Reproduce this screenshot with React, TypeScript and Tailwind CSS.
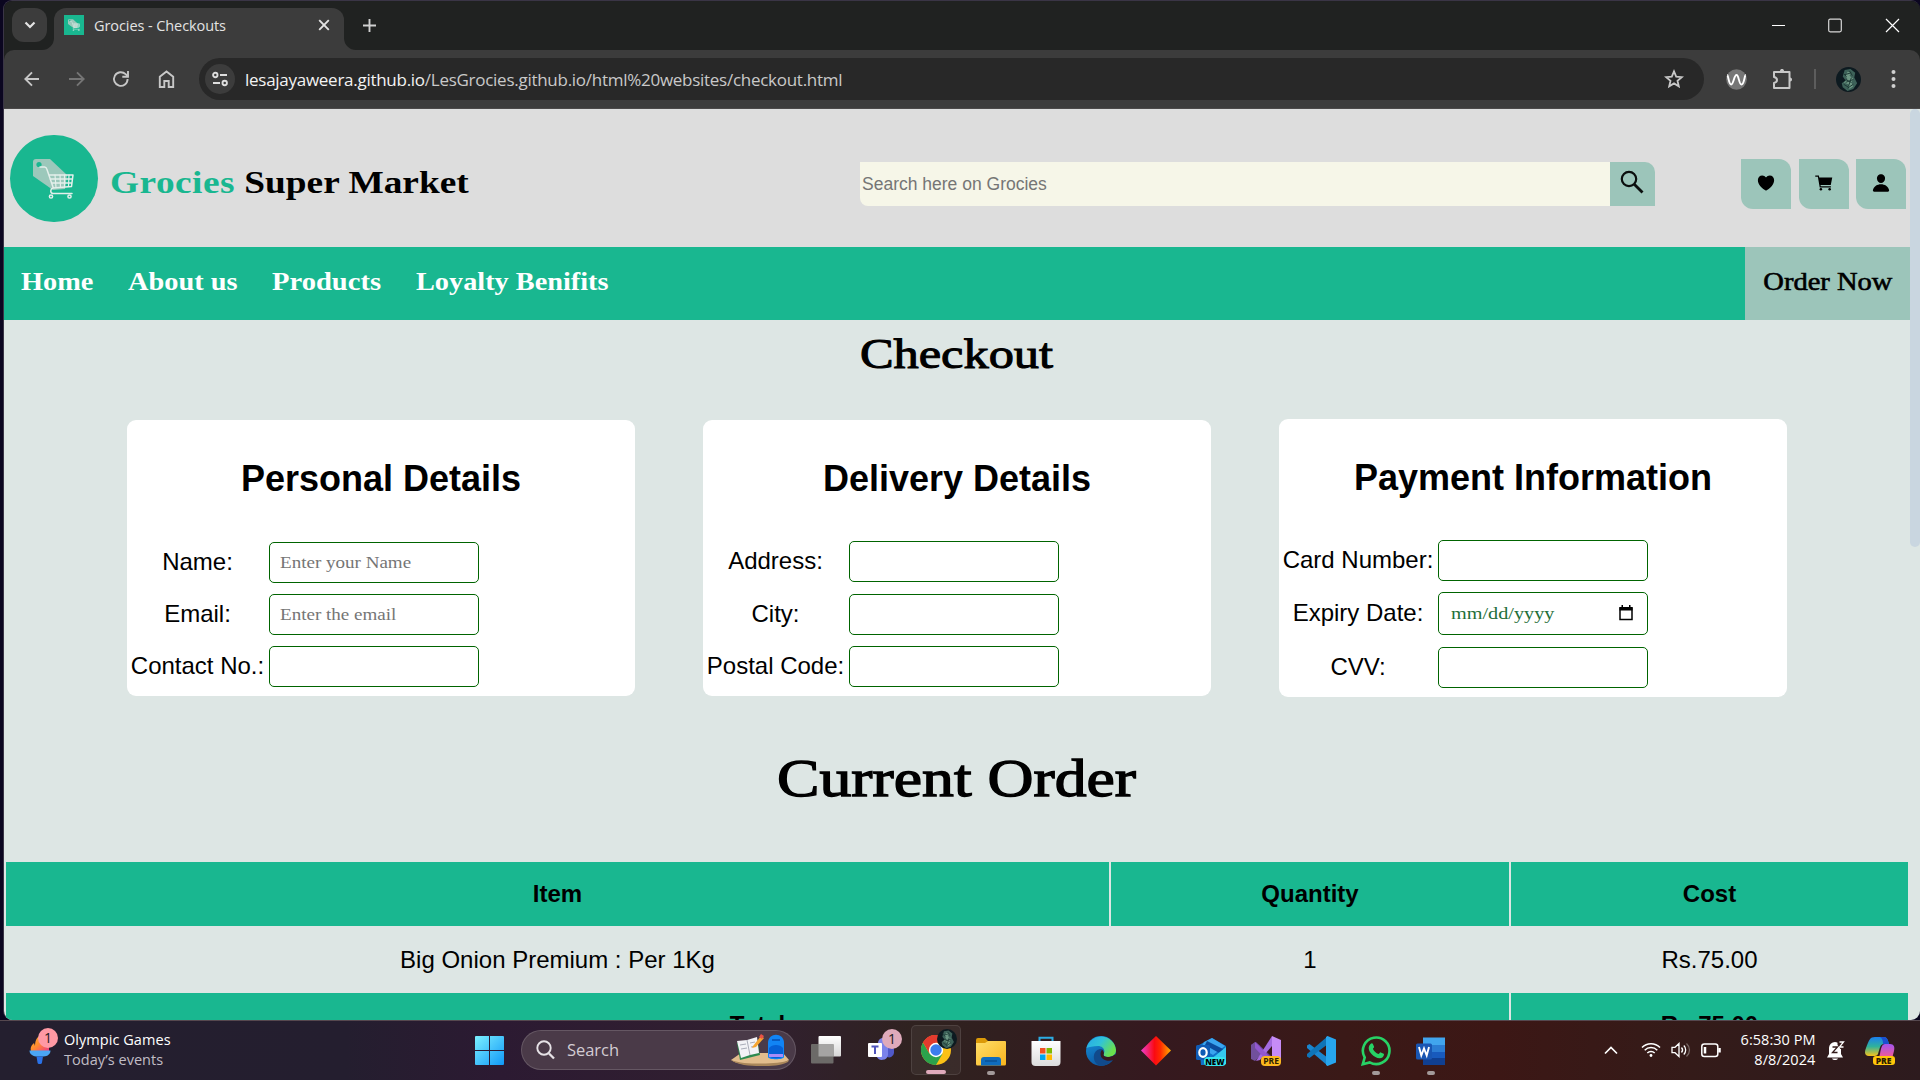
import React from 'react';
import { IoHeart, IoCartSharp, IoPerson } from 'react-icons/io5';

const serif = "font-['Liberation_Serif',serif]";
const sans = "font-['Liberation_Sans',sans-serif]";
const ui = "font-['Open_Sans','Noto_Sans',sans-serif]";

function TabStrip() {
  return (
    <div className="flex h-[49px] shrink-0 items-start bg-[#202221] pl-2 pt-[7px]">
      <div className="flex h-[34px] w-[35px] items-center justify-center rounded-xl bg-[#3c3c3c]">
        <svg width="12" height="8" viewBox="0 0 12 8" fill="none" stroke="#e3e3e3" strokeWidth="2.2">
          <path d="M1.5 1.5 6 6l4.500-4.500" />
        </svg>
      </div>
      <div className="relative ml-[7px] flex h-[42px] w-[290px] items-center rounded-t-xl bg-[#3c3c3c] pb-[8px] pl-[10px]">
        <svg className="absolute -left-3 bottom-0" width="12" height="12" viewBox="0 0 12 12" fill="#3c3c3c">
          <path d="M12 0v12H0A12 12 0 0 0 12 0Z" />
        </svg>
        <svg className="absolute -right-3 bottom-0" width="12" height="12" viewBox="0 0 12 12" fill="#3c3c3c">
          <path d="M0 0v12h12A12 12 0 0 1 0 0Z" />
        </svg>
        <div className="flex size-5 items-center justify-center bg-[#19b790]">
          <svg width="12" height="12" viewBox="0 0 41 40">
            <LogoShape />
          </svg>
        </div>
        <span className="ml-[10px] w-[224px] whitespace-nowrap pt-px text-[14.5px] leading-5 tracking-[-0.08px] text-[#e3e3e3]">Grocies - Checkouts</span>
        <svg width="12" height="12" viewBox="0 0 12 12" stroke="#e3e3e3" strokeWidth="1.900">
          <path d="m1.200 1.200 9.600 9.600M10.800 1.200l-9.600 9.600" />
        </svg>
      </div>
      <svg className="ml-[18px] mt-[10px]" width="15" height="15" viewBox="0 0 15 15" stroke="#d0d0d0" strokeWidth="1.900">
        <path d="M7.500 1v13M1 7.500h13" />
      </svg>
      <div className="ml-auto mr-[20px] mt-[10px] flex items-center">
        <svg width="13" height="15" viewBox="0 0 13 15">
          <path d="M0 7.500h13" stroke="#fff" strokeWidth="1" />
        </svg>
        <svg className="ml-[43px]" width="14" height="15" viewBox="0 0 14 15" fill="none" stroke="#d8d8d8" strokeWidth="1.200">
          <rect x=".7" y="1.200" width="12.600" height="12.600" rx="1.500" />
        </svg>
        <svg className="ml-[43px]" width="15" height="15" viewBox="0 0 15 15" stroke="#fff" strokeWidth="1.200">
          <path d="m1 1 13 13M14 1 1 14" />
        </svg>
      </div>
    </div>
  );
}

function Avatar({ size }: { size: string }) {
  return (
    <svg className={size} viewBox="0 0 26 26">
      <circle cx="13" cy="13" r="13" fill="#0d1a20" />
      <path d="M9 3l6-1 5 4-1 5 3 6-4 6-6 2-5-4-1-4 4-3-3-4z" fill="#3d6259" />
      <path d="M12 5l4 1-2 3 4 3-2 4 2 4-4 3-1-5-5-2 4-3-2-4z" fill="#6d9784" />
      <path d="M7 6l4 4M10 13l6 3M14 4l3 5M8 18l5 3M16 11l-3 9M9 8l7-2M10 16l8-3M12 22l6-4" stroke="#1c3834" strokeWidth="1" />
    </svg>
  );
}

function Toolbar() {
  const line = { fill: 'none', stroke: '#c7c7c7', strokeWidth: 1.9 };
  return (
    <div className="shrink-0 bg-[#202221]">
      <div className="flex h-[59px] items-center rounded-t-[10px] border-b border-[#4b4949] bg-[#3c3c3c] pl-5">
        <svg width="16" height="16" viewBox="0 0 16 16" {...line}>
          <path d="M15 8H2M8 1.300 1.300 8 8 14.700" />
        </svg>
        <svg className="ml-[29px]" width="16" height="16" viewBox="0 0 16 16" {...line} stroke="#757575">
          <path d="M0 8h14M8 1.300 14.700 8 8 14.700" />
        </svg>
        <svg className="ml-[27px]" width="18" height="18" viewBox="0 0 18 18" {...line}>
          <path d="M15.600 9a6.800 6.800 0 1 1-2-4.800L16 6.500" />
          <path d="M16 1v5.700h-5.700" />
        </svg>
        <svg className="ml-7" width="17" height="18" viewBox="0 0 17 18" {...line}>
          <path d="M1.800 17V6.800L8.500 1.500l6.700 5.300V17h-4.500v-6H6.300v6z" />
        </svg>
        <div className="ml-6 flex h-[42px] w-[1505px] items-center rounded-full bg-[#282828] pl-[6px]">
          <div className="flex size-[30px] items-center justify-center rounded-full bg-[#3c3c3c]">
            <svg width="16" height="16" viewBox="0 0 16 16" {...line} stroke="#dedede">
              <circle cx="3.300" cy="4" r="2.200" />
              <path d="M8 4h7M1 12h7" />
              <circle cx="12.700" cy="12" r="2.200" />
            </svg>
          </div>
          <span className="ml-[10px] whitespace-nowrap pt-px text-[17px] tracking-[-0.27px] text-[#c9c9c9]">
            <span className="text-[#f3f3f3]">lesajayaweera.github.io</span>/LesGrocies.github.io/html%20websites/checkout.html
          </span>
          <svg className="ml-auto mr-5" width="20" height="20" viewBox="0 0 20 20" {...line} strokeWidth="1.800">
            <path d="m10 2.400 2.200 5.200 5.600.5-4.300 3.700 1.300 5.500-4.800-2.900-4.800 2.900 1.300-5.500-4.300-3.700 5.600-.5z" />
          </svg>
        </div>
        <svg className="ml-[22px]" width="21" height="21" viewBox="0 0 21 21">
          <circle cx="10.500" cy="10.500" r="10.300" fill="#767676" />
          <path d="M1.200 6c1 0 1.600 9.500 4 9.500S8 6 10.500 6s2.300 9.500 5 9.500S18.500 6 19.800 6" fill="none" stroke="#fff" strokeWidth="1.900" />
        </svg>
        <svg className="ml-6" width="23" height="22" viewBox="0 0 23 22" {...line} strokeWidth="2">
          <path d="M3 4h15.500v16H3v-5c4-1 4-5 0-6z" strokeLinejoin="round" />
          <path d="M9 3c0-2.600 4-2.600 4 0zM19 9.500c2.800 0 2.800 4 0 4z" fill="#c7c7c7" stroke="none" />
        </svg>
        <div className="ml-[20px] h-5 w-[2px] bg-[#5d5d5d]" />
        <div className="ml-5 size-[25px]">
          <Avatar size="size-[25px]" />
        </div>
        <svg className="ml-[30px]" width="5" height="20" viewBox="0 0 5 20" fill="#d0d0d0">
          <circle cx="2.500" cy="3" r="2" />
          <circle cx="2.500" cy="10" r="2" />
          <circle cx="2.500" cy="17" r="2" />
        </svg>
      </div>
    </div>
  );
}

function LogoShape() {
  return (
    <g>
      <path d="M3 0h14l17 16-2 14-12 1L0 17V3a3 3 0 0 1 3-3z" fill="#9cc8bb" />
      <circle cx="6" cy="5.500" r="2.600" fill="#19b790" />
      <g fill="none" stroke="#e4efeb" strokeWidth="1.500" strokeLinejoin="round" strokeLinecap="round">
        <path d="M7 8h4.500c1.500 0 2 1 2.300 2L20 28M16 16h24l-1.500 11.500L20 29c-3 1-3 5 0 5.500h19M17 20h22.500M18.500 24h20.500" />
        <path d="M22 16l1 12.500M27 16l.5 12M31.500 16v12M36 16l-.5 11.500" strokeWidth="1.200" />
        <circle cx="18" cy="37.500" r="1.600" />
        <circle cx="36.500" cy="37.500" r="1.600" />
      </g>
    </g>
  );
}

function SiteHeader() {
  return (
    <header className="flex h-[138px] items-start bg-[#dddddd]">
      <div className="ml-[6px] mt-[26px] flex h-[87px] w-[88px] items-center justify-center rounded-full bg-[#19b790]">
        <svg className="-ml-px" width="41" height="40" viewBox="0 0 41 40">
          <LogoShape />
        </svg>
      </div>
      <div className={`${serif} ml-[12px] mt-[53px] w-[750px]`}>
        <h1 className="w-[310px] origin-left scale-x-[1.167] whitespace-nowrap text-[32px] font-bold leading-10 text-black">
          <span className="tracking-[0.4px] text-[#19b790]">Grocies</span> Super Market
        </h1>
      </div>
      <div className="mt-[53px] flex h-11">
        <div className={`${sans} flex w-[750px] items-center rounded-bl-[8px] bg-[#f6f6e8] pl-[2px] text-[17.500px] text-[#757575]`}>
          <span>Search here on Grocies</span>
        </div>
        <div className="flex w-[45px] justify-center rounded-tr-[10px] bg-[#9cc5ba] pt-2">
          <svg className="-ml-[2px]" width="24" height="24" viewBox="0 0 24 24" fill="none" stroke="#0b0f0e">
            <circle cx="9" cy="9" r="7.200" strokeWidth="2.200" />
            <path d="m14 14 8.500 8.500" strokeWidth="2.900" />
          </svg>
        </div>
      </div>
      <div className="ml-[86px] mt-[50px] flex gap-[7.500px] text-xl text-black">
        {[IoHeart, IoCartSharp, IoPerson].map((Icon, i) => (
          <div key={i} className="flex size-[50px] items-center justify-center rounded-bl-xl rounded-tr-xl bg-[#9cc5ba] pb-[2px]">
            <Icon />
          </div>
        ))}
      </div>
    </header>
  );
}

function SiteNav() {
  return (
    <nav className={`${serif} flex h-[73px] items-center bg-[#19b790] text-[26px] leading-8 text-white`}>
      <div className="flex whitespace-nowrap pb-[3px] font-bold">
        <span className="ml-[17px] w-[107px]"><span className="inline-block origin-left scale-x-[1.09]">Home</span></span>
        <span className="w-[144px]"><span className="inline-block origin-left scale-x-[1.09]">About us</span></span>
        <span className="w-[144px]"><span className="inline-block origin-left scale-x-[1.100]">Products</span></span>
        <span className="inline-block origin-left scale-x-[1.088]">Loyalty Benifits</span>
      </div>
      <div className="ml-auto flex h-full w-[165px] items-center justify-center bg-[#9cc5ba] pb-[3px] text-black">
        <span className="scale-x-[1.097] whitespace-nowrap [-webkit-text-stroke:0.6px_black]">Order Now</span>
      </div>
    </nav>
  );
}

type Field = { label: string; box: string; row?: string; placeholder?: string; date?: boolean };

function Card({ title, frame, head, labelWidth, fields }: { title: string; frame: string; head: string; labelWidth: string; fields: Field[] }) {
  return (
    <section className={`${frame} w-[508px] rounded-[9px] bg-white`}>
      <h2 className={`${head} ${sans} text-center text-[36px] font-bold leading-[117px] text-black`}>{title}</h2>
      {fields.map((f) => (
        <div key={f.label} className={`${f.row ?? ''} flex items-center`}>
          <div className={`${labelWidth} ${sans} pb-[2px] text-center text-[24px] leading-8 text-black`}>{f.label}</div>
          <div className={`${f.box} ml-px flex w-[210px] items-center rounded-[5px] border border-[#006400] pl-[10px] pr-[14px]`}>
            {f.placeholder && (
              <span className={`${serif} origin-left scale-x-[1.12] whitespace-nowrap text-[17px] text-[#757575]`}>{f.placeholder}</span>
            )}
            {f.date && (
              <>
                <span className={`${serif} ml-[2px] origin-left scale-x-[1.190] whitespace-nowrap text-[17px] text-[#1f6f3a]`}>mm/dd/yyyy</span>
                <svg className="mb-[2px] ml-auto" width="14" height="16" viewBox="0 0 14 16">
                  <path d="M1 3h12v11.500H1z" fill="none" stroke="#000" strokeWidth="1.500" />
                  <path d="M.5 2h13v3.500H.5zM2.500 0h1.500v2H2.500zM10 0h1.500v2H10z" />
                </svg>
              </>
            )}
          </div>
        </div>
      ))}
    </section>
  );
}

function OrderTable() {
  return (
    <div className={`${sans} mt-auto grid grid-cols-[1103px_398px_397px] gap-[2px] px-[2px] text-center text-[24px] leading-[63px] text-black`}>
      <div className="h-16 bg-[#19b790] font-bold">Item</div>
      <div className="h-16 bg-[#19b790] font-bold">Quantity</div>
      <div className="h-16 bg-[#19b790] font-bold">Cost</div>
      <div className="h-[63px]">Big Onion Premium : Per 1Kg</div>
      <div>1</div>
      <div>Rs.75.00</div>
      <div className="col-span-2 h-[27px] overflow-hidden bg-[#19b790] font-bold">Total</div>
      <div className="h-[27px] overflow-hidden bg-[#19b790] font-bold">Rs.75.00</div>
    </div>
  );
}

function Page() {
  return (
    <div className="flex min-h-0 flex-1 bg-[#dde6e4]">
      <div className="flex w-[1906px] flex-col">
        <SiteHeader />
        <SiteNav />
        <h1 className={`${serif} mt-[9px] pr-[2px] text-center text-[42px] leading-[50px] text-black [-webkit-text-stroke:1px_black]`}>
          <span className="inline-block scale-x-[1.2]">Checkout</span>
        </h1>
        <div className="mt-[40px] flex items-start pl-[123px]">
          <Card
            title="Personal Details"
            frame="mt-px h-[276px]"
            head="h-[122px]"
            labelWidth="w-[141px]"
            fields={[
              { label: 'Name:', box: 'h-[41px]', placeholder: 'Enter your Name' },
              { label: 'Email:', box: 'h-[41px]', row: 'mt-[11px]', placeholder: 'Enter the email' },
              { label: 'Contact No.:', box: 'h-[41px]', row: 'mt-[11px]' },
            ]}
          />
          <Card
            title="Delivery Details"
            frame="ml-[68px] mt-px h-[276px]"
            head="h-[121px]"
            labelWidth="w-[145px]"
            fields={[
              { label: 'Address:', box: 'h-[41px]' },
              { label: 'City:', box: 'h-[41px]', row: 'mt-[12px]' },
              { label: 'Postal Code:', box: 'h-[41px]', row: 'mt-[11px]' },
            ]}
          />
          <Card
            title="Payment Information"
            frame="ml-[68px] h-[278px]"
            head="h-[121px]"
            labelWidth="w-[158px]"
            fields={[
              { label: 'Card Number:', box: 'h-[41px]' },
              { label: 'Expiry Date:', box: 'h-[43px]', row: 'mt-[11px]', date: true },
              { label: 'CVV:', box: 'h-[41px]', row: 'mt-[12px]' },
            ]}
          />
        </div>
        <h1 className={`${serif} mt-[47px] text-center text-[52px] leading-[70px] text-black [-webkit-text-stroke:1.3px_black]`}>
          <span className="inline-block scale-x-[1.225]">Current Order</span>
        </h1>
        <OrderTable />
      </div>
      <div className="h-[438px] w-[10px] rounded-[5px] bg-[#c9d6e0]" />
    </div>
  );
}

function Slot({ children, mark }: { children: React.ReactNode; mark?: boolean }) {
  return (
    <div className="flex h-full w-[55px] flex-col items-center pt-[15px]">
      {children}
      {mark && <div className="mt-[5px] h-1 w-2 rounded-full bg-[#a39a9a]" />}
    </div>
  );
}

function Badge({ children, color }: { children: React.ReactNode; color: string }) {
  return <span className={`${color} absolute flex size-5 items-center justify-center rounded-full text-[14px] leading-none text-[#1c1a20]`}>{children}</span>;
}

function Apps() {
  return (
    <>
      <Slot>
        <svg width="30" height="30" viewBox="0 0 30 30">
          <defs>
            <linearGradient id="tv" x2="0" y2="1"><stop stopColor="#fff" /><stop offset="1" stopColor="#d6d6d6" /></linearGradient>
          </defs>
          <rect x="7.500" y="0" width="22.500" height="20.500" rx="1" fill="url(#tv)" />
          <rect y="8" width="22.500" height="19.500" rx="1" fill="#6c6a68" />
          <path d="M7.500 8h15v12.500h-15z" fill="#a5a4a3" />
        </svg>
      </Slot>
      <Slot>
        <div className="relative size-[30px]">
          <svg width="30" height="30" viewBox="0 0 30 30">
            <circle cx="17" cy="7" r="5" fill="#7b83eb" />
            <path d="M18 11h10v6a5 5 0 0 1-7 4z" fill="#5059c9" />
            <path d="M10 10h12v9a6 6 0 0 1-11.500 1z" fill="#7b83eb" />
            <rect x="2" y="7" width="14" height="14" rx="1" fill="#fff" />
            <path d="M5.500 10.500h7M9 10.500V18" stroke="#4f54bc" strokeWidth="2" />
          </svg>
          <div className="absolute left-[16px] top-[-7px]"><Badge color="bg-[#dfaabb]">1</Badge></div>
        </div>
      </Slot>
      <div className="flex h-full w-[55px] flex-col items-center pt-[4px]">
        <div className="relative flex h-[50px] w-[50px] flex-col items-center rounded-[5px] border border-white/10 bg-white/5 pt-[9px]">
          <svg width="30" height="30" viewBox="0 0 30 30">
            <circle cx="15" cy="15" r="15" fill="#fbc116" />
            <path d="M15 15 2 7.500A15 15 0 0 1 28 7.500H15z" fill="#e33b2e" />
            <path d="M2 7.500A15 15 0 0 0 15 30l6.500-11.300L15 15 8.500 18.700z" fill="#2ba24c" />
            <path d="M15 7.500h13A15 15 0 0 0 2 7.500l6.500 11z" fill="#e33b2e" />
            <circle cx="15" cy="15" r="7.200" fill="#fff" />
            <circle cx="15" cy="15" r="5.700" fill="#3b7ded" />
          </svg>
          <div className="absolute right-[3px] top-[3px] size-5"><Avatar size="size-5" /></div>
          <div className="mt-[5px] h-1 w-5 shrink-0 rounded-full bg-[#dfaabb]" />
        </div>
      </div>
      <Slot mark>
        <svg width="30" height="30" viewBox="0 0 30 30">
          <defs><linearGradient id="fold" x2="1" y2="1"><stop stopColor="#ffde6a" /><stop offset="1" stopColor="#f8b51d" /></linearGradient></defs>
          <path d="M0 4a2 2 0 0 1 2-2h7l3 3h14v6H0z" fill="#dc9a08" />
          <path d="M0 7h9l3-2h17a1 1 0 0 1 1 1V28a1.500 1.500 0 0 1-1.500 1.500h-27A1.500 1.500 0 0 1 0 28z" fill="url(#fold)" />
          <path d="M5 29.500V24a3 3 0 0 1 3-3h14a3 3 0 0 1 3 3v5.500z" fill="#0f6cbd" />
          <path d="M9 25h12" stroke="#0a4a8a" strokeWidth="1.200" />
        </svg>
      </Slot>
      <Slot>
        <svg width="30" height="30" viewBox="0 0 30 30">
          <defs><linearGradient id="bag" x2="0" y2="1"><stop stopColor="#fff" /><stop offset="1" stopColor="#dcdcdc" /></linearGradient></defs>
          <path d="M8.500 6V1.800h13V6" fill="none" stroke="#2cace3" strokeWidth="2" />
          <path d="M.5 5h29v21a4 4 0 0 1-4 4h-21a4 4 0 0 1-4-4z" fill="url(#bag)" />
          <path d="M9 12h5.500v5.500H9z" fill="#f25022" /><path d="M15.500 12H21v5.500h-5.500z" fill="#7fba00" />
          <path d="M9 18.500h5.500V24H9z" fill="#00a4ef" /><path d="M15.500 18.500H21V24h-5.500z" fill="#ffb900" />
        </svg>
      </Slot>
      <Slot>
        <svg width="30" height="30" viewBox="0 0 30 30">
          <defs>
            <linearGradient id="e1" x2="1" y2=".5"><stop stopColor="#26a9e8" /><stop offset=".5" stopColor="#31c3d8" /><stop offset="1" stopColor="#6be04c" /></linearGradient>
            <linearGradient id="e2" x2=".4" y2="1"><stop stopColor="#1794dc" /><stop offset="1" stopColor="#0c59a4" /></linearGradient>
          </defs>
          <circle cx="15" cy="15" r="15" fill="url(#e2)" />
          <path d="M.5 12A15 15 0 0 1 30 14c0 5-4 7-8 7-5 0-5-2-4-4 1.500-4-2-7-6-7-5 0-9 1-11.500 2z" fill="url(#e1)" />
          <path d="M18 17c-1 2-1 4 4 4 3 0 5-.5 7-2.500C27 26 20 30 15 30c-5-1-8-6-7-11 1-4 4-6 7-6 2 0 3 2 3 4z" fill="#114a8b" />
          <path d="M18 17c-1 2-1 4 4 4 3 0 5.500-1 7.500-3l1 4-3 2c-6 2-13 0-13-6 0-2 1-4 2-4z" fill="#38191f" />
        </svg>
      </Slot>
      <Slot>
        <svg width="30" height="30" viewBox="0 0 30 30">
          <defs><linearGradient id="dia"><stop stopColor="#ec3fd0" /><stop offset=".45" stopColor="#fa0a12" /><stop offset=".65" stopColor="#ff2a00" /><stop offset="1" stopColor="#ffb000" /></linearGradient></defs>
          <path d="m15 0 15 14.500L15 29.500 0 14.500z" fill="url(#dia)" />
        </svg>
      </Slot>
      <Slot>
        <div className="relative size-[30px]">
          <svg width="30" height="30" viewBox="0 0 30 30">
            <path d="M3 9 16 2l14 8v16a3 3 0 0 1-3 3H5z" fill="#1073c9" />
            <path d="m8 6 8-4 13 8-12 9L5 12z" fill="#3aa5ef" />
            <path d="m11 5 18 9-4 4L9 9z" fill="#0a4b9c" />
            <path d="M30 11v17H9z" fill="#35c8ef" />
            <rect y="9" width="14" height="15" rx="1.500" fill="#0f5bb5" />
            <ellipse cx="7" cy="16.500" rx="3.700" ry="4.300" fill="none" stroke="#fff" strokeWidth="2.200" />
          </svg>
          <span className="absolute bottom-0 right-0 rounded-sm bg-[#35e4ec] px-[1.500px] text-[8px] font-extrabold leading-[9px] text-black">NEW</span>
        </div>
      </Slot>
      <Slot>
        <div className="relative size-[30px]">
          <svg width="30" height="30" viewBox="0 0 30 30">
            <path d="M0 9 5 6l17 16v7L0 11z" fill="#6a3f9c" />
            <path d="M0 9v14l4 2 5-5V10L4 6z" fill="#71509c" />
            <path d="M5 25 21 0v10L9 24z" fill="#a36be0" />
            <path d="m21 0 9 4v22l-9 4z" fill="#c68cf7" />
            <path d="m4 6 17 17v7L4 12z" fill="#9258cf" />
          </svg>
          <span className="absolute bottom-0 right-0 rounded-sm bg-[#fcb81e] px-[2px] text-[8.500px] font-bold leading-[10px] text-[#2b2000]">PRE</span>
        </div>
      </Slot>
      <Slot>
        <svg width="30" height="30" viewBox="0 0 30 30">
          <path d="M1 9.500 3.500 8 22 22v8L1 12z" fill="#1a86cf" />
          <path d="M1 20.500 3.500 22 22 8V0L1 18z" fill="#0f74b8" />
          <path d="M21.500 0 30 3.500v23L21.500 30 20 29V1z" fill="#27a5ee" />
        </svg>
      </Slot>
      <Slot mark>
        <svg width="30" height="30" viewBox="0 0 30 30">
          <path d="M1.800 28.200 3.700 21.500A13.300 13.300 0 1 1 8.700 26.400z" fill="none" stroke="#27d265" strokeWidth="2.600" />
          <path d="M9.500 8c1-1 2-.8 2.400 0l1.200 2.800c.2.800-1.400 1.800-1.100 2.300 1.200 2.400 3 4 5.400 5 .8.100 1.700-2 2.400-1.700l2.900 1.400c.8.500 0 2.600-1 3.400-3 2.300-8 .3-11.200-3.200C7 14.300 7 10.500 9.500 8z" fill="#27d265" />
        </svg>
      </Slot>
      <Slot mark>
        <svg width="30" height="30" viewBox="0 0 30 30">
          <path d="M7 1.500h22V9H7z" fill="#41a5ee" /><path d="M7 9h22v7H7z" fill="#2b7cd3" />
          <path d="M7 16h22v7H7z" fill="#185abd" /><path d="M7 22h22v7H7z" fill="#103f91" />
          <rect y="7.500" width="16" height="16" rx="1.500" fill="#1956b3" />
          <path d="m3 11 2.300 8.500L8 12.500l2.700 7L13 11" fill="none" stroke="#fff" strokeWidth="1.900" />
        </svg>
      </Slot>
    </>
  );
}

function Taskbar() {
  return (
    <div className="flex h-[60px] shrink-0 items-start border-t border-[#56484f] bg-[linear-gradient(90deg,#241f2f_0%,#241e2f_18%,#2c1a32_26%,#31202f_40%,#2f221f_48%,#35191f_60%,#3a1917_70%,#3c1715_78%,#341b19_88%,#2d1b1e_100%)]">
      <div className="relative ml-[29px] mt-[13px] h-[31px] w-[35px]">
        <svg width="24" height="31" viewBox="0 0 24 31">
          <defs><linearGradient id="fl" x2="1" y2="1"><stop stopColor="#ffb42c" /><stop offset=".5" stopColor="#ff8b30" /><stop offset="1" stopColor="#ef3a86" /></linearGradient></defs>
          <path d="M2 17c-1-4 1-6 3-8l1 3C6 6 8 3 12 1l8 10v6z" fill="url(#fl)" />
          <path d="M.5 16.500h21c0 5-5 6-8 6h-5c-4 0-8-2-8-6z" fill="#4ba6f5" />
          <path d="M7.500 22.500h6.500l-1 6c0 2-4.500 2-4.500 0z" fill="#2a72e8" />
        </svg>
        <div className="absolute left-[9px] top-[-6px]"><Badge color="bg-[#ff99a4]">1</Badge></div>
      </div>
      <div className="mt-[9px] w-[411px] whitespace-nowrap text-[14.500px] leading-5 tracking-[0.05px]">
        <div className="text-white">Olympic Games</div>
        <div className="text-[#c0bdc5]">Today’s events</div>
      </div>
      <svg className="mt-[15px]" width="29" height="29" viewBox="0 0 29 29">
        <defs><linearGradient id="win" x2="1" y2="1"><stop stopColor="#7cf0ff" /><stop offset="1" stopColor="#1098f7" /></linearGradient></defs>
        <path d="M1 0h13v14H0V1a1 1 0 0 1 1-1zM15 0h13a1 1 0 0 1 1 1v13H15zM0 15h14v14H1a1 1 0 0 1-1-1zM15 15h14v13a1 1 0 0 1-1 1H15z" fill="url(#win)" />
      </svg>
      <div className="ml-[17px] mt-[9px] flex h-10 w-[275px] items-center rounded-full border border-white/15 bg-[#4a3a48] pl-[14px]">
        <svg width="19" height="20" viewBox="0 0 19 20" fill="none" stroke="#e6e2e6">
          <circle cx="8" cy="8" r="6.700" strokeWidth="1.900" />
          <path d="m13 13.500 5 5" strokeWidth="2.300" />
        </svg>
        <span className="ml-[12px] pt-px text-[16.500px] tracking-[-0.05px] text-[#d3ccd3]">Search</span>
        <svg className="ml-auto mr-[6px]" width="58" height="34" viewBox="0 0 58 34">
          <path d="M0 27 10 20h42l6 7c-6 4-14 5-29 5S6 31 0 27z" fill="#e2bd8d" />
          <path d="M0 27c8 3 18 3.500 29 3.500S52 30 58 27l-1 2c-8 4-18 4-28 4S6 32 0 27z" fill="#a9865a" />
          <path d="m6 10 20-4 3 16-20 5z" fill="#2d8a50" />
          <path d="m6 8 10-1 10-3 2 16-9 2-9 3z" fill="#f2f2f6" />
          <path d="m16 7 3 15M9 12l6-1M10 16l6-1M19 10l5-1M20 14l5-1" stroke="#a9acb8" strokeWidth="1" />
          <path d="m22 13 8-10 3 2-8 9-4 1z" fill="#f5a531" /><path d="m28 4 2-3 3 2-2 3z" fill="#ea5345" />
          <path d="M37 10c0-11 16-11 16 0v14c0 3-16 3-16 0z" fill="#1184f5" />
          <path d="M38 15c3-4 11-4 14 0v8c-3 3-11 3-14 0z" fill="#0560d6" />
          <path d="M38 21h14v3H38z" fill="#a88cf8" /><path d="M41 7h8" stroke="#064eb0" strokeWidth="1.500" />
        </svg>
      </div>
      <div className="ml-[2.500px] flex h-full">
        <Apps />
      </div>
      <svg className="ml-[145px] mt-[24px]" width="14" height="11" viewBox="0 0 14 11" fill="none" stroke="#fff" strokeWidth="1.700">
        <path d="m1 8.500 6-6 6 6" />
      </svg>
      <svg className="ml-[23px] mt-[20px]" width="20" height="17" viewBox="0 0 20 17" fill="none" stroke="#fff" strokeWidth="1.500">
        <path d="M1 6.500a12.700 12.700 0 0 1 18 0M3.700 9.200a8.900 8.900 0 0 1 12.600 0M6.300 12a5.200 5.200 0 0 1 7.400 0" />
        <circle cx="10" cy="14.500" r="1.400" fill="#fff" stroke="none" />
      </svg>
      <svg className="ml-[10px] mt-[20px]" width="20" height="18" viewBox="0 0 20 18" fill="none" stroke="#fff" strokeWidth="1.300">
        <path d="M1 6.300h3L8 2.500v13L4 11.700H1zM10.500 6.500c1.300 1.500 1.300 3.500 0 5M12.800 4.500c2.500 2.500 2.500 6.500 0 9" />
        <path d="M15.500 2.500c4 3.800 4 9.300 0 13" stroke="#776663" />
      </svg>
      <svg className="ml-[10px] mt-[22px]" width="20" height="15" viewBox="0 0 20 15" fill="none" stroke="#fff" strokeWidth="1.500">
        <rect x=".8" y="1" width="16" height="12.500" rx="2.500" />
        <path d="M4 4v6.500M18.500 5v4.500" strokeWidth="2.500" />
      </svg>
      <div className="mt-[9px] w-[95px] whitespace-nowrap text-right text-[14.500px] leading-5 tracking-[0.03px] text-white">
        <div>6:58:30 PM</div>
        <div className="tracking-[0.1px]">8/8/2024</div>
      </div>
      <svg className="ml-[11px] mt-[20px]" width="18" height="20" viewBox="0 0 18 20">
        <path d="M2 13V7a6 6 0 0 1 12 0v6l2 3.500H0zM5 17.500h6c-1 2-5 2-6 0z" fill="#fff" />
        <path d="M5.500 6h5l-5 5.500h5" fill="none" stroke="#331b1a" strokeWidth="1.300" />
        <path d="M10.500 0h7v8h-4l-3-4z" fill="#331b1a" />
        <path d="M12.500 1h4l-4 5h4" fill="none" stroke="#fff" strokeWidth="1.300" />
      </svg>
      <div className="relative ml-[20px] mt-[15px] h-[29px] w-[30px]">
        <svg width="30" height="30" viewBox="0 0 30 30">
          <defs>
            <linearGradient id="c1" x2="0" y2="1"><stop stopColor="#1b7ff0" /><stop offset=".5" stopColor="#2fb29b" /><stop offset="1" stopColor="#f7c31b" /></linearGradient>
            <linearGradient id="c2" x2="0" y2="1"><stop stopColor="#a154ef" /><stop offset=".6" stopColor="#ec5a9b" /><stop offset="1" stopColor="#f98a4c" /></linearGradient>
          </defs>
          <path d="M10 1h9c3 0 4 3 5 7h-5c-4 0-4 4-6 10-1 2-3 2-5 2H4c-4 0-5-3-3-8C4 4 5 1 10 1z" fill="url(#c1)" />
          <path d="M15 1h4c3 0 4 3 5 7h-6c0-4-1-6-3-7z" fill="#1b4fd0" />
          <path d="M20 8h5c4 0 5 3 4 7-2 8-3 13-9 13h-6c-3 0-1-3 1-10 1-6 2-10 5-10z" fill="url(#c2)" />
        </svg>
        <span className="absolute bottom-0 right-0 rounded-[3px] bg-[#ffc60a] px-[3px] text-[8.500px] font-extrabold leading-[9px] text-[#2b2000]">PRE</span>
      </div>
    </div>
  );
}

export default function App() {
  return (
    <div className={`${ui} flex h-[1080px] w-[1920px] flex-col overflow-hidden bg-[#0b0620]`}>
      <div className="ml-[3px] flex h-[1020px] flex-col overflow-hidden rounded-[9px] border-l border-t border-[#3a3546]">
        <TabStrip />
        <Toolbar />
        <Page />
      </div>
      <Taskbar />
    </div>
  );
}
